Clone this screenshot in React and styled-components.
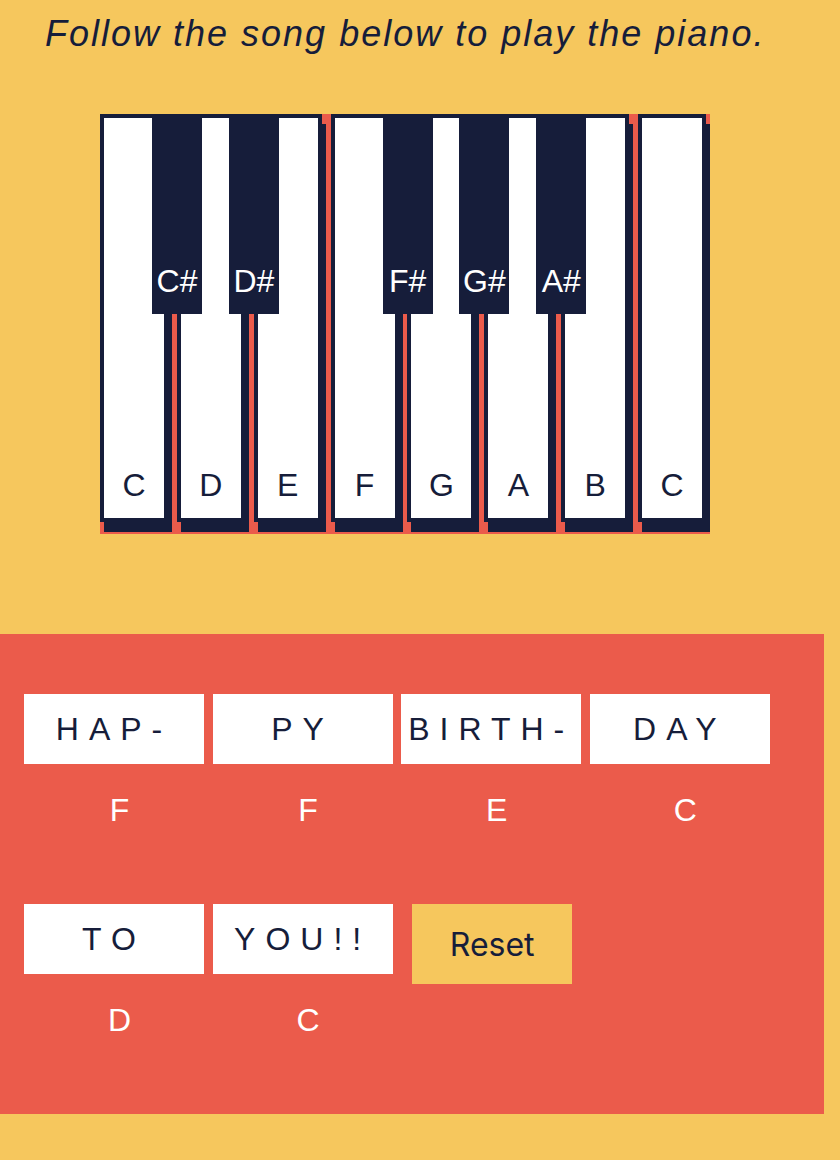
import styled, { createGlobalStyle } from "styled-components";

const navy = "#161d3a";
const red = "#eb5b4b";
const yellow = "#f6c75d";

const KEYS = [
  { note: "C", sharp: "C#" },
  { note: "D", sharp: "D#" },
  { note: "E" },
  { note: "F", sharp: "F#" },
  { note: "G", sharp: "G#" },
  { note: "A", sharp: "A#" },
  { note: "B" },
  { note: "C" },
];

const SONG = [
  [
    { word: "Hap-", note: "F" },
    { word: "py", note: "F" },
    { word: "Birth-", note: "E" },
    { word: "day", note: "C" },
  ],
  [
    { word: "to", note: "D" },
    { word: "you!!", note: "C" },
  ],
];

export default function App() {
  return (
    <Page>
      <GlobalStyle />
      <Title>Follow the song below to play the piano.</Title>

      <Piano>
        {KEYS.map((key, i) => (
          <WhiteKey key={i}>
            {key.note}
            {key.sharp && <BlackKey>{key.sharp}</BlackKey>}
          </WhiteKey>
        ))}
      </Piano>

      <Song>
        {SONG.map((line, i) => (
          <Line key={i}>
            {line.map((item, j) => (
              <Word key={j}>
                <WordBox>{item.word}</WordBox>
                <Note>{item.note}</Note>
              </Word>
            ))}
            {i === SONG.length - 1 && <ResetButton>Reset</ResetButton>}
          </Line>
        ))}
      </Song>
    </Page>
  );
}

const GlobalStyle = createGlobalStyle`
  html, body {
    margin: 0;
    background: ${yellow};
  }
  body {
    font-family: "Liberation Sans", Arial, sans-serif;
    color: ${navy};
  }
`;

const Page = styled.div`
  min-height: 1160px;
  overflow: hidden;
`;

const Title = styled.h1`
  margin: 0;
  padding: 13px 0 0 45px;
  font-size: 36px;
  font-style: italic;
  font-weight: 400;
  letter-spacing: 2px;
  line-height: normal;
`;

const Piano = styled.div`
  display: flex;
  align-items: flex-start;
  gap: 8.86px;
  width: fit-content;
  margin: 59px 0 0 100px;
  padding: 0 4px 12px 0;
  background: ${red};
  font-size: 32px;
  line-height: normal;
`;

const WhiteKey = styled.div`
  position: relative;
  flex-shrink: 0;
  width: 60px;
  height: 386px;
  padding-bottom: 14px;
  border: 4px solid ${navy};
  background: #fff;
  box-shadow: 4px 10px 0 ${navy};
  display: flex;
  flex-direction: column;
  justify-content: flex-end;
  align-items: center;
  color: ${navy};
`;

const BlackKey = styled.div`
  position: absolute;
  z-index: 1;
  top: -4px;
  left: 48px;
  width: 50px;
  height: 200px;
  box-sizing: border-box;
  padding-bottom: 14px;
  background: ${navy};
  color: #fff;
  display: flex;
  flex-direction: column;
  justify-content: flex-end;
  align-items: center;
`;

const Song = styled.div`
  width: calc(100% - 16px);
  box-sizing: border-box;
  margin-top: 100px;
  padding: 60px 24px 75px;
  background: ${red};
  display: flex;
  flex-direction: column;
  gap: 75px;
  font-size: 32px;
  line-height: normal;
`;

const Line = styled.div`
  display: flex;
  align-items: flex-start;
  gap: 8.6px;
`;

const Word = styled.div`
  width: 180px;
  display: flex;
  flex-direction: column;
`;

const WordBox = styled.div`
  height: 70px;
  background: #fff;
  color: ${navy};
  display: flex;
  align-items: center;
  justify-content: center;
  text-transform: uppercase;
  letter-spacing: 10px;
`;

const Note = styled.div`
  margin-top: 28px;
  padding-left: 11px;
  color: #fff;
  text-align: center;
`;

const ResetButton = styled.button`
  margin-left: 11px;
  width: 160px;
  height: 80px;
  border: none;
  padding: 0;
  background: ${yellow};
  color: ${navy};
  font-family: Inter, "Liberation Sans", sans-serif;
  font-size: 32px;
`;
